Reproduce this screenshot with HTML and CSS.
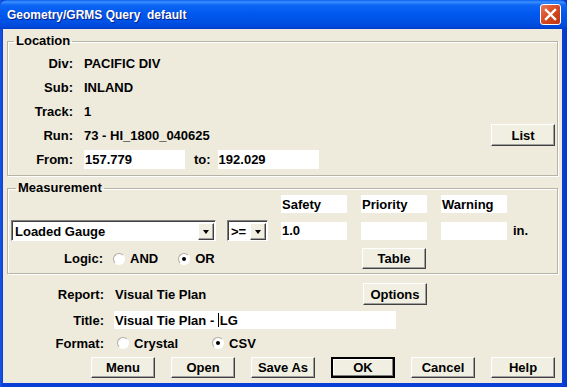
FILE: index.html
```html
<!DOCTYPE html>
<html lang="en">
<head>
  <meta charset="UTF-8">
  <title>Geometry/GRMS Query</title>
  <link rel="stylesheet" href="styles.css">
</head>
<body>
  <div class="window">
    <div class="titlebar">
      <span class="title">Geometry/GRMS Query&nbsp; default</span>
      <span class="close">
        <svg width="13" height="13" viewBox="0 0 13 13"><path d="M2 2L11 11M11 2L2 11" stroke="#fff" stroke-width="2.4" stroke-linecap="square"/></svg>
      </span>
    </div>

    <div class="client">
      <!-- Location -->
      <fieldset class="group location">
        <legend>Location</legend>
        <div class="row"><span class="lbl">Div:</span><span class="val">PACIFIC DIV</span></div>
        <div class="row"><span class="lbl">Sub:</span><span class="val">INLAND</span></div>
        <div class="row"><span class="lbl">Track:</span><span class="val">1</span></div>
        <div class="row">
          <span class="lbl">Run:</span><span class="val">73 - HI_1800_040625</span>
          <span class="btn list">List</span>
        </div>
        <div class="row">
          <span class="lbl">From:</span>
          <span class="field from">157.779</span>
          <span class="to">to:</span>
          <span class="field from">192.029</span>
        </div>
      </fieldset>

      <!-- Measurement -->
      <fieldset class="group measure">
        <legend>Measurement</legend>
        <div class="mgrid">
          <span class="head c3">Safety</span>
          <span class="head c4">Priority</span>
          <span class="head c5">Warning</span>

          <span class="combo wide c1"><span class="ctext">Loaded Gauge</span><span class="drop"></span></span>
          <span class="combo c2"><span class="ctext">&gt;=</span><span class="drop"></span></span>
          <span class="field cell c3">1.0</span>
          <span class="field cell c4"></span>
          <span class="field cell c5"></span>
          <span class="unit c6">in.</span>

          <span class="logic">
            <span class="lbl-inline">Logic:</span>
            <span class="radio"></span><span class="rtext">AND</span>
            <span class="radio on"></span><span class="rtext">OR</span>
          </span>
          <span class="btn c4">Table</span>
        </div>
      </fieldset>

      <!-- Report -->
      <div class="row2 report">
        <span class="lbl2">Report:</span>
        <span class="val rep">Visual Tie Plan</span>
        <span class="btn">Options</span>
      </div>
      <div class="row2 titlerow">
        <span class="lbl2">Title:</span>
        <span class="field titlefield"><span class="ftext">Visual Tie Plan - <span class="caret"></span>LG</span></span>
      </div>
      <div class="row2 format">
        <span class="lbl2">Format:</span>
        <span class="radio"></span><span class="rtext crystal">Crystal</span>
        <span class="radio on"></span><span class="rtext">CSV</span>
      </div>

      <div class="buttons">
        <span class="btn">Menu</span>
        <span class="btn">Open</span>
        <span class="btn">Save As</span>
        <span class="btn default">OK</span>
        <span class="btn">Cancel</span>
        <span class="btn">Help</span>
      </div>
    </div>
  </div>
</body>
</html>
```

FILE: styles.css
```css
*{margin:0;padding:0;box-sizing:border-box;}
body{width:567px;height:387px;overflow:hidden;background:#fff;
  font-family:"Liberation Sans",Arial,sans-serif;font-size:13px;font-weight:bold;color:#000;}

.window{width:567px;height:387px;display:flex;flex-direction:column;
  background:linear-gradient(90deg,#1656e6 0,#0a3fd6 3px,#0a3fd6 562px,#0838cc 567px);}
.titlebar{height:29px;display:flex;align-items:center;padding:0 6px 0 7px;
  background:linear-gradient(#0a5ff2 0,#3d8ffc 2px,#0d66f5 5px,#0058ee 14px,#0051e4 22px,#0047d8 27px,#003cc6 29px);
  border-radius:7px 7px 0 0;}
.title{color:#fff;font-size:12px;text-shadow:1px 1px 0 #0a1e82;flex:1;}
.close{width:21px;height:21px;border:1px solid #fff;border-radius:3px;
  background:linear-gradient(135deg,#e9795a,#d6491f 50%,#bf3510);
  display:flex;align-items:center;justify-content:center;}

.client{flex:1;margin:0 5px 4px 3px;background:#eeebdd;display:flex;flex-direction:column;}

.group{border:1px solid #b6b4a6;box-shadow:inset 1px 1px 0 #fff,1px 1px 0 #fff;
  margin:5px 4px 0 4px;}
.group legend{margin-left:5px;padding:0 2px;line-height:14px;height:14px;}
.location{padding:3px 2px 4px 1px;}
.measure{padding:0 2px 4px 3px;}

.row{display:flex;align-items:center;height:24px;}
.lbl{width:64px;text-align:right;margin-right:11px;}
.val{white-space:nowrap;}
.field{background:#fff;height:19px;display:flex;align-items:center;padding-left:1px;white-space:nowrap;}
.ftext{white-space:pre;}
.from{width:101px;}
.to{margin:0 7px 0 9px;}
.list{margin-left:auto;}

.btn{width:64px;height:22px;display:flex;align-items:center;justify-content:center;
  background:#f1efe2;border:1px solid;border-color:#fff #404040 #404040 #fff;
  box-shadow:inset -1px -1px 0 #a0a0a0;}
.btn.default{border:2px solid #000;box-shadow:inset -1px -1px 0 #808080,inset 1px 1px 0 #fff;}

.mgrid{display:grid;grid-template-columns:216px 54px 80px 80px 69px auto;
  grid-template-rows:18px 21px 21px;row-gap:7px;align-items:center;}
.c1{grid-column:1;}
.c2{grid-column:2;}
.c3{grid-column:3;}
.c4{grid-column:4;}
.c5{grid-column:5;}
.c6{grid-column:6;}
.head{background:#fff;width:66px;height:18px;display:flex;align-items:center;padding-left:1px;grid-row:1;}
.cell{width:66px;height:18px;grid-row:2;}
.unit{grid-row:2;padding-left:3px;}
.combo{grid-row:2;height:21px;background:#fff;display:flex;align-items:center;
  border:1px solid;border-color:#808080 #fff #fff #808080;box-shadow:inset 1px 1px 0 #404040;padding:2px 1px 1px 2px;}
.combo.wide{width:205px;}
.combo.c2{width:41px;}
.ctext{flex:1;padding-left:1px;}
.drop{width:16px;height:17px;background:#f1efe2;border:1px solid;border-color:#fff #404040 #404040 #fff;
  box-shadow:inset -1px -1px 0 #a0a0a0;position:relative;}
.drop::after{content:"";position:absolute;left:4px;top:6px;border:3.5px solid transparent;border-top:4px solid #000;border-bottom:0;}
.btn.c4{grid-row:3;height:21px;margin-left:1px;}

.logic{grid-column:1 / 3;grid-row:3;display:flex;align-items:center;padding-left:53px;}
.lbl-inline{margin-right:10px;}
.radio{width:12px;height:12px;border-radius:50%;background:#fff;border:1px solid;
  border-color:#b0ad9f #fff #fff #b0ad9f;position:relative;flex:none;}
.radio.on::after{content:"";position:absolute;left:3px;top:3px;width:4px;height:4px;border-radius:50%;background:#000;}
.rtext{margin-left:5px;margin-right:20px;}

.row2{display:flex;align-items:center;padding-left:4px;}
.lbl2{width:97px;text-align:right;margin-right:11px;}
.report{height:22px;margin-top:9px;}
.rep{width:248px;}
.titlerow{height:24px;margin-top:3px;}
.titlefield{width:282px;height:18px;margin-left:-1px;}
.caret{display:inline-block;width:1px;height:14px;background:#000;margin-right:1px;vertical-align:-2px;}
.format{height:22px;}
.format .radio{margin-left:2px;}
.crystal{margin-right:32px;}

.buttons{display:flex;gap:16px;padding-left:88px;margin-top:3px;}
.buttons .btn{height:21px;}
```
